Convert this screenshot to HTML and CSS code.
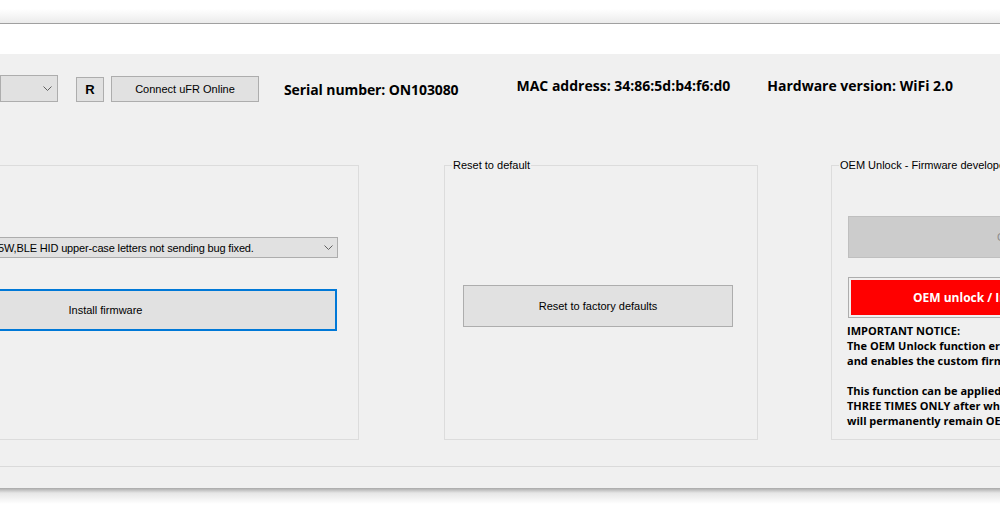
FILE: index.html
```html
<!DOCTYPE html>
<html lang="en">
<head>
  <meta charset="UTF-8">
  <title>uFR Online Firmware Tool</title>
  <link rel="stylesheet" href="styles.css">
</head>
<body>
  <div class="titlebar"></div>
  <div class="strip"></div>

  <div class="window">
    <!-- Connection toolbar -->
    <div class="toolbar">
      <div class="combo port-combo">
        <span class="combo-text"></span>
        <svg class="chevron" width="9" height="5" viewBox="0 0 9 5"><polyline points="0.5,0.5 4.5,4.5 8.5,0.5" fill="none" stroke="#606060" stroke-width="1"/></svg>
      </div>
      <button class="btn btn-r">R</button>
      <button class="btn btn-connect">Connect uFR Online</button>
      <span class="info info-serial">Serial number: ON103080</span>
      <span class="info info-mac">MAC address: 34:86:5d:b4:f6:d0</span>
      <span class="info info-hw">Hardware version: WiFi 2.0</span>
    </div>

    <!-- Groups -->
    <div class="groups">
      <div class="group group-firmware">
        <div class="combo fw-combo">
          <span class="combo-text">5W,BLE HID upper-case letters not sending bug fixed.</span>
          <svg class="chevron" width="9" height="5" viewBox="0 0 9 5"><polyline points="0.5,0.5 4.5,4.5 8.5,0.5" fill="none" stroke="#606060" stroke-width="1"/></svg>
        </div>
        <button class="btn btn-install">Install firmware</button>
      </div>

      <div class="group group-reset">
        <span class="legend">Reset to default</span>
        <button class="btn btn-reset">Reset to factory defaults</button>
      </div>

      <div class="group group-oem">
        <span class="legend">OEM Unlock - Firmware developer mode</span>
        <button class="btn btn-disabled">Check OEM status</button>
        <button class="btn btn-oem"><span>OEM unlock / Install custom firmware</span></button>
        <div class="notice">
          <p>IMPORTANT NOTICE:<br>The OEM Unlock function erases the firmware<br>and enables the custom firmware upload.</p>
          <p>This function can be applied<br>THREE TIMES ONLY after which the device<br>will permanently remain OEM unlocked.</p>
        </div>
      </div>
    </div>
  </div>

  <div class="statusbar"></div>
  <div class="shadow"></div>
</body>
</html>
```

FILE: styles.css
```css
/* General Styles */
body {
  margin: 0;
  width: 1000px;
  height: 509px;
  overflow: hidden;
  background-color: #ffffff;
  font-family: 'Liberation Sans', Arial, sans-serif;
  font-size: 11px;
  color: #000000;
}

.titlebar {
  height: 23px;
  background: linear-gradient(#ffffff 0, #ffffff 9px, #ebebeb 23px);
  border-bottom: 1px solid #a0a0a0;
}

.strip {
  height: 30px;
}

.window {
  height: 412px;
  background-color: #f0f0f0;
  border-bottom: 1px solid #dadada;
  overflow: hidden;
}

.statusbar {
  height: 21px;
  background-color: #f0f0f0;
}

.shadow {
  height: 16px;
  background: linear-gradient(#a8a8a8, #e6e6e6 5px, #ffffff 16px);
}

/* Buttons and combos */
.btn {
  box-sizing: border-box;
  margin: 0;
  padding: 0;
  font-family: 'Liberation Sans', Arial, sans-serif;
  font-size: 11px;
  color: #000000;
  background-color: #e1e1e1;
  border: 1px solid #adadad;
  border-radius: 0;
}

.combo {
  box-sizing: border-box;
  display: flex;
  align-items: center;
  background-color: #e1e1e1;
  border: 1px solid #adadad;
  white-space: nowrap;
  overflow: hidden;
}

.combo-text {
  flex: 1;
  overflow: hidden;
}

.chevron {
  flex: none;
}

/* Toolbar */
.toolbar {
  display: flex;
  align-items: flex-end;
  height: 27px;
  padding-top: 21px;
}

.port-combo {
  width: 58px;
  height: 27px;
}

.port-combo .chevron {
  margin-right: 5px;
}

.btn-r {
  width: 28px;
  height: 25px;
  margin-left: 18px;
  font-weight: bold;
  font-size: 13px;
}

.btn-connect {
  width: 148px;
  height: 26px;
  margin-left: 7px;
}

.info {
  font-family: 'Open Sans', sans-serif;
  font-weight: bold;
  font-size: 14px;
  line-height: 18px;
  white-space: nowrap;
}

.info-serial {
  margin-left: 25px;
  margin-bottom: 3px;
  letter-spacing: -0.1px;
}

.info-mac {
  margin-left: 58px;
  margin-bottom: 7px;
}

.info-hw {
  margin-left: 37px;
  margin-bottom: 7px;
}

/* Group boxes */
.groups {
  display: flex;
  margin-top: 63px;
}

.group {
  position: relative;
  box-sizing: border-box;
  flex: none;
  height: 275px;
  border: 1px solid #dcdcdc;
}

.legend {
  position: absolute;
  top: -7px;
  left: 7px;
  padding: 0 1px;
  background-color: #f0f0f0;
  white-space: nowrap;
  line-height: 13px;
}

.group-firmware {
  width: 505px;
  margin-left: -146px;
  padding: 71px 20px 0 19px;
}

.fw-combo {
  width: 464px;
  height: 21px;
}

.fw-combo .combo-text {
  padding-left: 123px;
  letter-spacing: -0.15px;
}

.fw-combo .chevron {
  margin-right: 4px;
}

.btn-install {
  display: block;
  width: 463px;
  height: 42px;
  margin-top: 31px;
  border: 2px solid #0078d7;
}

.group-reset {
  width: 314px;
  margin-left: 85px;
  padding: 119px 0 0 18px;
}

.btn-reset {
  width: 270px;
  height: 42px;
}

.group-oem {
  width: 320px;
  margin-left: 73px;
  padding: 50px 0 0 16px;
}

.btn-disabled {
  display: block;
  width: 300px;
  height: 42px;
  background-color: #cccccc;
  border-color: #bfbfbf;
  color: #8d8d8d;
  text-align: left;
  padding-left: 148px;
}

.btn-oem {
  display: block;
  width: 300px;
  height: 41px;
  margin-top: 19px;
  padding: 2px;
  background-color: #f0f0f0;
}

.btn-oem span {
  display: block;
  height: 100%;
  background-color: #ff0000;
  color: #ffffff;
  font-family: 'Open Sans', sans-serif;
  font-weight: bold;
  font-size: 12px;
  text-align: left;
  padding-left: 62px;
  line-height: 35px;
  white-space: nowrap;
}

.notice {
  margin-top: 5px;
  margin-left: -1px;
  font-family: 'Open Sans', sans-serif;
  font-weight: bold;
  font-size: 11px;
  line-height: 15px;
  white-space: nowrap;
}

.notice p {
  margin: 0 0 15px;
}
```
